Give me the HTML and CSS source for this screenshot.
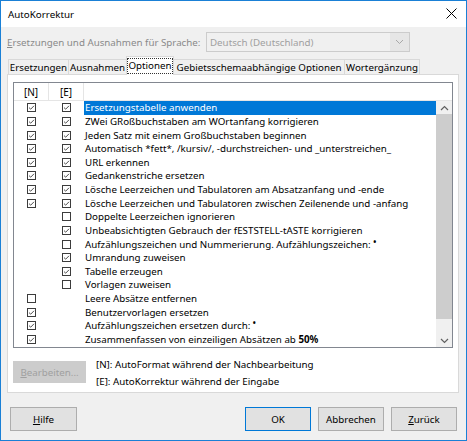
FILE: index.html
```html
<!DOCTYPE html>
<html>
<head>
<meta charset="utf-8">
<link rel="stylesheet" href="styles.css">
</head>
<body>
<div class="win">
  <div class="titlebar">
    <span class="title">AutoKorrektur</span>
    <svg class="close" width="11" height="11" viewBox="0 0 11 11"><path d="M0.5 0.5L10.5 10.5M10.5 0.5L0.5 10.5" stroke="#000" stroke-width="1" fill="none"/></svg>
  </div>
  <div class="body">
    <div class="langrow">
      <span class="langlabel"><u>E</u>rsetzungen und Ausnahmen für Sprache:</span>
      <div class="combo">
        <span class="combotext">Deutsch (Deutschland)</span>
        <span class="comboarrow"><svg width="9" height="6" viewBox="0 0 9 6"><path d="M1 1L4.5 4.5L8 1" stroke="#a8a8a8" stroke-width="1" fill="none"/></svg></span>
      </div>
    </div>
    <div class="tabs">
      <div class="tab t1">Ersetzungen</div>
      <div class="tab t2">Ausnahmen</div>
      <div class="tab t3 active"><span class="focus">Optionen</span></div>
      <div class="tab t4">Gebietsschemaabhängige Optionen</div>
      <div class="tab t5">Wortergänzung</div>
    </div>
    <div class="panel">
      <div class="list">
        <div class="lhead">
          <div class="hc hn">[N]</div>
          <div class="hc he">[E]</div>
          <div class="hc hr"></div>
        </div>
        <div class="lbody">
          <div class="rows" id="rows"></div>
          <div class="scroll">
            <div class="sbtn"><svg width="9" height="6" viewBox="0 0 9 6"><path d="M1 5L4.5 1.5L8 5" stroke="#606060" stroke-width="1.2" fill="none"/></svg></div>
            <div class="thumb"></div>
            <div class="track"></div>
            <div class="sbtn"><svg width="9" height="6" viewBox="0 0 9 6"><path d="M1 1L4.5 4.5L8 1" stroke="#606060" stroke-width="1.2" fill="none"/></svg></div>
          </div>
        </div>
      </div>
      <div class="under">
        <div class="editbtn"><u>B</u>earbeiten...</div>
        <div class="legend">
          <div>[N]: AutoFormat während der Nachbearbeitung</div>
          <div>[E]: AutoKorrektur während der Eingabe</div>
        </div>
      </div>
    </div>
    <div class="buttons">
      <div class="btn b-help"><u>H</u>ilfe</div>
      <div class="spacer"></div>
      <div class="btn default">OK</div>
      <div class="btn">Abbrechen</div>
      <div class="btn"><u>Z</u>urück</div>
    </div>
  </div>
</div>
<script src="app.js"></script>
</body>
</html>
```
FILE: app.js
```js
var data = [
  [1,1,"Ersetzungstabelle anwenden"],
  [1,1,"ZWei GRoßbuchstaben am WOrtanfang korrigieren"],
  [1,1,"Jeden Satz mit einem Großbuchstaben beginnen"],
  [1,1,"Automatisch *fett*, /kursiv/, -durchstreichen- und _unterstreichen_"],
  [1,1,"URL erkennen"],
  [1,1,"Gedankenstriche ersetzen"],
  [1,1,"Lösche Leerzeichen und Tabulatoren am Absatzanfang und -ende"],
  [1,1,"Lösche Leerzeichen und Tabulatoren zwischen Zeilenende und -anfang"],
  [2,0,"Doppelte Leerzeichen ignorieren"],
  [2,1,"Unbeabsichtigten Gebrauch der fESTSTELL-tASTE korrigieren"],
  [2,0,"Aufzählungszeichen und Nummerierung. Aufzählungszeichen: <span class=\"dot\">•</span>"],
  [2,1,"Umrandung zuweisen"],
  [2,1,"Tabelle erzeugen"],
  [2,0,"Vorlagen zuweisen"],
  [0,2,"Leere Absätze entfernen"],
  [1,2,"Benutzervorlagen ersetzen"],
  [1,2,"Aufzählungszeichen ersetzen durch: <span class=\"dot\">•</span>"],
  [1,2,"Zusammenfassen von einzeiligen Absätzen ab <b>50%</b>"]
];
function box(v){
  if (v === 2) return '<span class="cb empty"></span>';
  var s = '<svg class="cb" width="9" height="9" viewBox="0 0 9 9"><rect x="0.5" y="0.5" width="8" height="8" fill="#fff" stroke="#3c3c3c" stroke-width="1"/>';
  if (v === 1) s += '<path d="M2 4.6L3.7 6.2L7 2.8" stroke="#3c3c3c" stroke-width="0.9" fill="none"/>';
  return s + '</svg>';
}
var html = '';
data.forEach(function(r, i){
  html += '<div class="row' + (i === 0 ? ' sel' : '') + '"><div class="cn">' + box(r[0]) + '</div><div class="ce">' + box(r[1]) + '</div><div class="ct">' + r[2] + '</div></div>';
});
document.getElementById('rows').innerHTML = html;
```
FILE: styles.css
```css
* { box-sizing: border-box; }
html, body { margin: 0; padding: 0; }
body { font-family: "Noto Sans", "Open Sans", sans-serif; font-size: 9.75px; color: #000; }
u { text-decoration: underline; text-underline-offset: 1px; }
.win { width: 467px; height: 441px; border: 1px solid #1a80d6; background: #f0f0f0; display: flex; flex-direction: column; overflow: hidden; }
.titlebar { height: 26px; background: #fff; display: flex; align-items: center; justify-content: space-between; padding: 0 9px 0 7px; flex: none; }
.title { font-size: 9.8px; }
.close { margin-top: -1px; }
.body { flex: 1; display: flex; flex-direction: column; }
.langrow { height: 20px; margin-top: 5px; display: flex; align-items: center; padding-left: 6px; }
.langlabel { color: #8a8a8a; width: 199px; white-space: nowrap; }
.combo { width: 204px; height: 20px; border: 1px solid #cccccc; background: #f0f0f0; display: flex; align-items: center; }
.combotext { flex: 1; color: #a0a0a0; padding-left: 3px; }
.comboarrow { width: 19px; height: 18px; background: #e6e6e6; display: flex; align-items: center; justify-content: center; }
.tabs { display: flex; align-items: flex-end; height: 18px; margin-top: 4px; padding-left: 7px; position: relative; z-index: 1; flex: none; }
.tab { height: 15px; border: 1px solid #d9d9d9; border-bottom: none; background: #f0f0f0; display: flex; align-items: center; justify-content: center; white-space: nowrap; margin-right: -1px; }
.t1 { width: 61px; }
.t2 { width: 59px; }
.t3 { width: 48px; }
.t4 { width: 172px; }
.t5 { width: 76px; }
.tab.active { height: 19px; background: #fff; margin-bottom: -1px; position: relative; padding-bottom: 1px; }
.focus { border: 1px dotted #333; padding: 0 0 1px 0; line-height: 13px; }
.panel { margin: 0 7px 0 6px; height: 319px; background: #fff; border: 1px solid #d9d9d9; padding: 7px 5px 0 5px; flex: none; }
.list { height: 266px; border: 1px solid #828790; display: flex; flex-direction: column; background: #fff; }
.lhead { height: 18px; display: flex; border-bottom: 1px solid #e5e5e5; flex: none; }
.hc { display: flex; align-items: center; justify-content: center; border-right: 1px solid #e5e5e5; font-size: 10px; }
.hn { width: 35px; }
.he { width: 35px; }
.hr { flex: 1; border-right: none; }
.lbody { flex: 1; display: flex; overflow: hidden; }
.rows { flex: 1; overflow: hidden; }
.row { height: 13.625px; display: flex; align-items: center; white-space: nowrap; }
.cn, .ce { width: 35px; flex: none; display: flex; justify-content: center; }
.cb { display: block; }
.cb.empty { width: 9px; height: 9px; }
.ct { flex: 1; padding-left: 1px; line-height: 13px; }
.row.sel .ct { background: #0078d7; color: #fff; height: 13.625px; display: flex; align-items: center; }
.dot { font-size: 8px; position: relative; top: -3px; font-weight: bold; }
.scroll { width: 16px; flex: none; background: #f0f0f0; display: flex; flex-direction: column; }
.sbtn { height: 13px; display: flex; align-items: center; justify-content: center; flex: none; }
.thumb { height: 205px; background: #cdcdcd; flex: none; }
.track { flex: 1; }
.under { display: flex; margin-top: 13px; }
.editbtn { width: 73px; height: 22px; background: #cccccc; color: #a0a0a0; display: flex; align-items: center; justify-content: center; flex: none; }
.legend { margin-left: 10px; margin-top: -3px; display: flex; flex-direction: column; gap: 3px; line-height: 14px; }
.buttons { display: flex; padding: 14px 9px 0 9px; gap: 7px; }
.spacer { flex: 1; }
.btn { width: 66px; height: 24px; border: 1px solid #adadad; background: #e1e1e1; display: flex; align-items: center; justify-content: center; }
.btn.default { border: 1px solid #0078d7; }
.b-help { width: 67px; }
```
